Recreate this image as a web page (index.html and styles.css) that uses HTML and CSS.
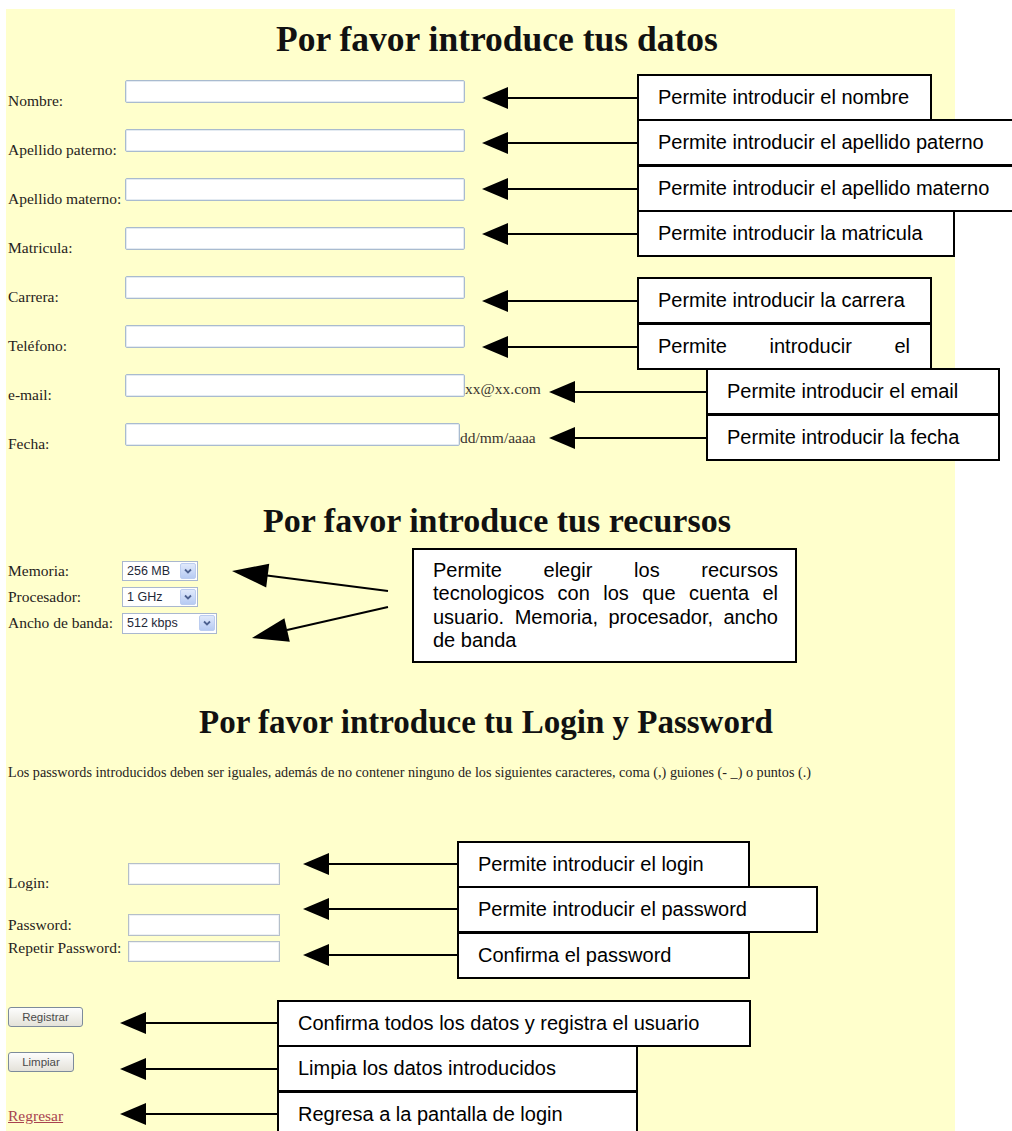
FILE: index.html
```html
<!DOCTYPE html>
<html lang="es">
<head>
<meta charset="utf-8">
<title>Registro de usuario</title>
<link rel="stylesheet" href="styles.css">
</head>
<body>
<div class="sheet">
  <main class="page">
    <h1 class="title t1">Por favor introduce tus datos</h1>
    <div class="fields">
      <div class="row"><span class="lbl">Nombre:</span><input class="txt" type="text"></div>
      <div class="row"><span class="lbl">Apellido paterno:</span><input class="txt" type="text"></div>
      <div class="row"><span class="lbl">Apellido materno:</span><input class="txt" type="text"></div>
      <div class="row"><span class="lbl">Matricula:</span><input class="txt" type="text"></div>
      <div class="row"><span class="lbl">Carrera:</span><input class="txt" type="text"></div>
      <div class="row"><span class="lbl">Teléfono:</span><input class="txt" type="text"></div>
      <div class="row"><span class="lbl">e-mail:</span><input class="txt" type="text"><span class="hint">xx@xx.com</span></div>
      <div class="row"><span class="lbl">Fecha:</span><input class="txt short" type="text"><span class="hint">dd/mm/aaaa</span></div>
    </div>

    <h2 class="title t2">Por favor introduce tus recursos</h2>
    <div class="res">
      <div class="rrow r1"><span class="rlbl">Memoria:</span>
        <div class="sel w76"><span class="val">256 MB</span><span class="dd"><svg viewBox="0 0 10 10"><path d="M2 3.5l3 3 3-3"/></svg></span></div>
      </div>
      <div class="rrow r2"><span class="rlbl">Procesador:</span>
        <div class="sel w76"><span class="val">1 GHz</span><span class="dd"><svg viewBox="0 0 10 10"><path d="M2 3.5l3 3 3-3"/></svg></span></div>
      </div>
      <div class="rrow r3"><span class="rlbl">Ancho de banda:</span>
        <div class="sel w95"><span class="val">512 kbps</span><span class="dd"><svg viewBox="0 0 10 10"><path d="M2 3.5l3 3 3-3"/></svg></span></div>
      </div>
    </div>

    <h2 class="title t3">Por favor introduce tu Login y Password</h2>
    <p class="note">Los passwords introducidos deben ser iguales, además de no contener ninguno de los siguientes caracteres, coma (,) guiones (- _) o puntos (.)</p>

    <div class="login">
      <div class="lrow l1"><span class="llbl">Login:</span><input class="ltxt" type="text"></div>
      <div class="lrow l2"><span class="llbl">Password:</span><input class="ltxt" type="password"></div>
      <div class="lrow l3"><span class="llbl">Repetir Password:</span><input class="ltxt" type="password"></div>
    </div>

    <div class="actions">
      <button class="btn reg" type="button">Registrar</button>
      <button class="btn lim" type="button">Limpiar</button>
      <a class="back" href="#">Regresar</a>
    </div>
  </main>

  <svg class="arrows" width="1012" height="1131" viewBox="0 0 1012 1131">
    <g class="shaft">
      <line x1="506" y1="98" x2="637" y2="98"/>
      <line x1="506" y1="143" x2="637" y2="143"/>
      <line x1="506" y1="189" x2="637" y2="189"/>
      <line x1="506" y1="234" x2="637" y2="234"/>
      <line x1="506" y1="301" x2="637" y2="301"/>
      <line x1="506" y1="347" x2="637" y2="347"/>
      <line x1="573" y1="392" x2="706" y2="392"/>
      <line x1="573" y1="438" x2="706" y2="438"/>
      <line x1="267" y1="575.5" x2="388" y2="591"/>
      <line x1="287" y1="630" x2="388" y2="607"/>
      <line x1="327" y1="864" x2="457" y2="864"/>
      <line x1="327" y1="909" x2="457" y2="909"/>
      <line x1="327" y1="955" x2="457" y2="955"/>
      <line x1="144" y1="1023" x2="277" y2="1023"/>
      <line x1="144" y1="1069" x2="277" y2="1069"/>
      <line x1="144" y1="1114" x2="277" y2="1114"/>
    </g>
    <g class="head">
      <polygon points="482,98 508,87 508,109"/>
      <polygon points="482,143 508,132 508,154"/>
      <polygon points="482,189 508,178 508,200"/>
      <polygon points="482,234 508,223 508,245"/>
      <polygon points="482,301 508,290 508,312"/>
      <polygon points="482,347 508,336 508,358"/>
      <polygon points="549,392 575,381 575,403"/>
      <polygon points="549,438 575,427 575,449"/>
      <polygon points="232,571 266.2,587.5 269.2,563.7"/>
      <polygon points="252,638 289.8,641.7 284.4,618.3"/>
      <polygon points="303,864 329,853 329,875"/>
      <polygon points="303,909 329,898 329,920"/>
      <polygon points="303,955 329,944 329,966"/>
      <polygon points="120,1023 146,1012 146,1034"/>
      <polygon points="120,1069 146,1058 146,1080"/>
      <polygon points="120,1114 146,1103 146,1125"/>
    </g>
  </svg>

  <div class="co c1">Permite introducir el nombre</div>
  <div class="co c2">Permite introducir el apellido paterno</div>
  <div class="co c3">Permite introducir el apellido materno</div>
  <div class="co c4">Permite introducir la matricula</div>
  <div class="co c5">Permite introducir la carrera</div>
  <div class="co c6"><div class="clip">Permite introducir el teléfono</div></div>
  <div class="co c7">Permite introducir el email</div>
  <div class="co c8">Permite introducir la fecha</div>
  <div class="co cr">Permite elegir los recursos tecnologicos con los que cuenta el usuario. Memoria, procesador, ancho de banda</div>
  <div class="co cl1">Permite introducir el login</div>
  <div class="co cl2">Permite introducir el password</div>
  <div class="co cl3">Confirma el password</div>
  <div class="co cb1">Confirma todos los datos y registra el usuario</div>
  <div class="co cb2">Limpia los datos introducidos</div>
  <div class="co cb3">Regresa a la pantalla de login</div>
</div>
</body>
</html>
```

FILE: styles.css
```css
html, body {
  margin: 0;
  padding: 0;
  background: #ffffff;
}

.sheet {
  position: relative;
  width: 1012px;
  height: 1131px;
  overflow: hidden;
}

.page {
  display: block;
  box-sizing: border-box;
  margin: 9px 0 0 6px;
  width: 949px;
  height: 1122px;
  padding-left: 2px;
  background: #ffffcc;
  font-family: "Liberation Serif", "Times New Roman", serif;
  font-size: 15.5px;
  color: #262220;
  overflow: hidden;
}

.title {
  margin: 0;
  font-family: "Liberation Serif", "Times New Roman", serif;
  font-weight: bold;
  font-size: 34px;
  line-height: 40px;
  color: #111;
  text-align: center;
  white-space: nowrap;
}

.t1 { margin-top: 10px; padding-left: 31px; font-size: 35.5px; }
.t2 { margin-top: 29px; padding-left: 31px; }
.t3 { margin-top: 66px; padding-left: 9px; font-size: 33px; }

/* personal data */
.fields {
  margin-top: 21px;
  display: flex;
  flex-direction: column;
}

.row {
  display: flex;
  align-items: flex-start;
  height: 49px;
}

.lbl {
  width: 117px;
  padding-top: 12px;
  line-height: 18px;
  white-space: nowrap;
}

.txt {
  box-sizing: border-box;
  width: 340px;
  height: 23px;
  margin: 0;
  border: 1px solid #a9bbcf;
  border-radius: 2px;
  background: #fff;
  box-shadow: inset 0 0 0 1px #e4ebf2;
}

.txt.short { width: 335px; }

.hint {
  padding-top: 6px;
  line-height: 18px;
  white-space: nowrap;
  color: #3a3430;
}

/* resources */
.res {
  margin-top: 18px;
  display: flex;
  flex-direction: column;
}

.rrow {
  display: flex;
  align-items: center;
}

.rrow.r1 { height: 24px; }
.rrow.r2 { height: 27px; }
.rrow.r3 { height: 26px; }

.rlbl {
  width: 114px;
  line-height: 18px;
  white-space: nowrap;
}

.sel {
  box-sizing: border-box;
  height: 20px;
  display: flex;
  align-items: center;
  border: 1px solid #a9b7cf;
  background: #fff;
  padding: 0 1px 0 4px;
  font-family: "Liberation Sans", Arial, sans-serif;
  font-size: 12.5px;
  color: #1e2838;
}

.r3 .sel { height: 21px; }

.sel.w76 { width: 76px; }
.sel.w95 { width: 95px; }

.sel .val {
  flex: 1;
  white-space: nowrap;
}

.sel .dd {
  box-sizing: border-box;
  width: 16px;
  height: 16px;
  display: flex;
  align-items: center;
  justify-content: center;
  border: 1px solid #bccdf0;
  border-radius: 2px;
  background: linear-gradient(#e0e9fb, #b7cbf3);
}

.sel .dd svg {
  width: 10px;
  height: 10px;
}

.sel .dd path {
  fill: none;
  stroke: #4d6190;
  stroke-width: 1.8;
}

/* login */
.note {
  margin: 22px 0 0;
  font-size: 14.2px;
  line-height: 17px;
  white-space: nowrap;
  color: #262220;
}

.login {
  margin-top: 82px;
  display: flex;
  flex-direction: column;
}

.lrow {
  display: flex;
  align-items: flex-start;
}

.lrow.l1 { height: 51px; }
.lrow.l2 { height: 27px; }
.lrow.l3 { height: 22px; }

.llbl {
  width: 120px;
  line-height: 18px;
  white-space: nowrap;
}

.l1 .llbl { padding-top: 11px; }
.l2 .llbl { margin-top: 2px; }
.l3 .llbl { margin-top: -2px; }

.ltxt {
  box-sizing: border-box;
  width: 152px;
  height: 22px;
  margin: 0;
  border: 1px solid #b5bfc9;
  background: #fff;
  box-shadow: inset 0 0 0 1px #eef1f4;
}

.l3 .ltxt { height: 21px; }

/* actions */
.actions {
  margin-top: 44px;
  display: flex;
  flex-direction: column;
  align-items: flex-start;
}

.btn {
  box-sizing: border-box;
  height: 20px;
  margin: 0;
  padding: 0;
  border: 1px solid #7d8b9b;
  border-radius: 3px;
  background: linear-gradient(#fdfdfd, #e4e2d9);
  font-family: "Liberation Sans", Arial, sans-serif;
  font-size: 11.5px;
  color: #4a4a4a;
}

.btn.reg { width: 75px; }
.btn.lim { width: 66px; margin-top: 25px; }

.back {
  margin-top: 35px;
  line-height: 18px;
  color: #a8434f;
  text-decoration: underline;
}

/* annotation overlay */
.arrows {
  position: absolute;
  left: 0;
  top: 0;
  pointer-events: none;
}

.arrows .shaft line {
  stroke: #000;
  stroke-width: 2;
}

.arrows .head polygon {
  fill: #000;
}

.co {
  position: absolute;
  box-sizing: border-box;
  height: 47px;
  display: flex;
  align-items: center;
  padding: 0 17px 0 19px;
  border: 2px solid #000;
  background: #fff;
  font-family: "Liberation Sans", Arial, sans-serif;
  font-size: 20px;
  line-height: 23px;
  color: #000;
  white-space: nowrap;
  overflow: hidden;
}

.c1 { left: 637px; top: 74px; width: 295px; }
.c2 { left: 637px; top: 119px; width: 380px; }
.c3 { left: 637px; top: 165px; width: 380px; }
.c4 { left: 637px; top: 210px; width: 318px; }
.c5 { left: 637px; top: 277px; width: 295px; }
.c6 {
  left: 637px;
  top: 323px;
  width: 295px;
  display: block;
  padding: 9.5px 20px 0 19px;
}
.c6 .clip {
  height: 23px;
  overflow: hidden;
  white-space: normal;
  text-align: justify;
}
.c7 { left: 706px; top: 368px; width: 294px; }
.c8 { left: 706px; top: 414px; width: 294px; }

.cr {
  left: 412px;
  top: 548px;
  width: 385px;
  height: 115px;
  display: block;
  padding: 9px 17px 0 19px;
  white-space: normal;
  text-align: justify;
  line-height: 23.3px;
}

.cl1 { left: 457px; top: 841px; width: 293px; }
.cl2 { left: 457px; top: 886px; width: 361px; }
.cl3 { left: 457px; top: 932px; width: 293px; }

.cb1 { left: 277px; top: 1000px; width: 474px; }
.cb2 { left: 277px; top: 1045px; width: 361px; }
.cb3 { left: 277px; top: 1091px; width: 361px; }
```
